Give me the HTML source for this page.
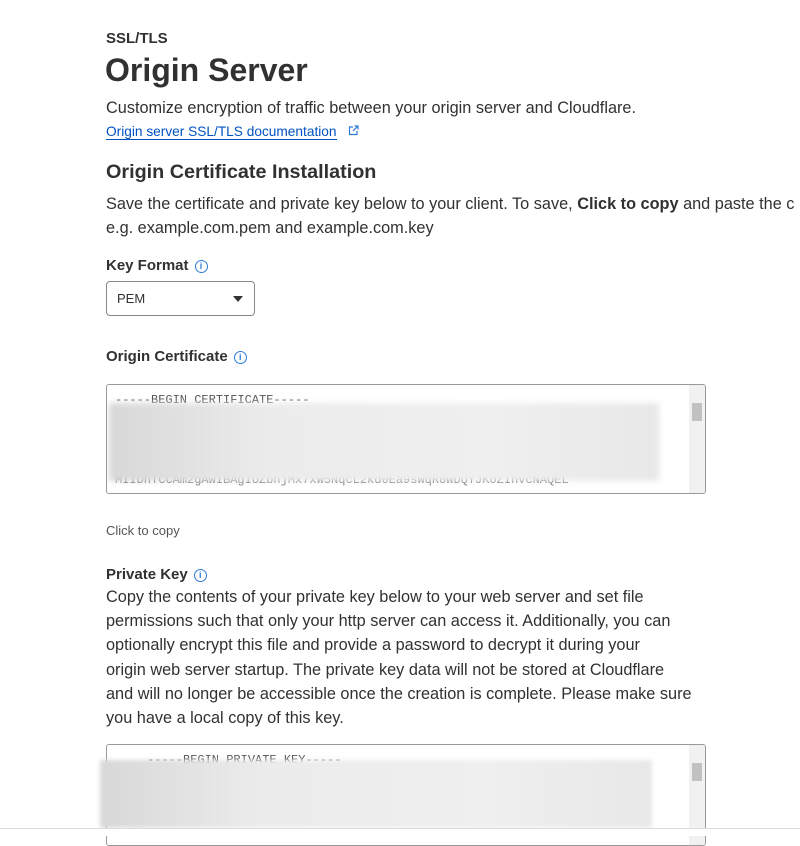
<!DOCTYPE html>
<html><head><meta charset="utf-8"><style>
body{margin:0;width:800px;height:835px;overflow:hidden;background:#fff;font-family:"Liberation Sans",sans-serif;color:#313131;position:relative}
.a{position:absolute;white-space:nowrap}
.i{display:inline-block;width:11px;height:11px;border:1.3px solid #2f7bd9;border-radius:50%;color:#2f7bd9;font-size:9px;line-height:11px;text-align:center;font-weight:bold;vertical-align:1px;margin-left:6px}
.ta{position:absolute;left:106px;width:598px;border:1px solid #999;border-radius:3px;background:#fff;overflow:hidden}
.sb{position:absolute;right:0;top:0;bottom:0;width:16px;background:#f1f1f1}
.th{position:absolute;right:3px;width:10px;top:18px;height:18px;background:#c1c1c1}
.blur{position:absolute;background:linear-gradient(90deg,#d8d8d8,#ececec 30%,#efefef 70%,#e8e8e8);filter:blur(3px)}
.mono{font-family:"Liberation Mono",monospace;font-size:12px;color:#555;position:absolute;left:8px}
.p{font-size:16.3px}
</style></head><body>
<div class="a" style="left:106px;top:30px;font-size:15px;font-weight:bold">SSL/TLS</div>
<div class="a" style="left:105px;top:52px;font-size:32px;font-weight:bold">Origin Server</div>
<div class="a p" style="left:106px;top:99px">Customize encryption of traffic between your origin server and Cloudflare.</div>
<div class="a" style="left:106px;top:124px;font-size:13.7px;color:#0051c3;border-bottom:1px solid #0051c3">Origin server SSL/TLS documentation</div>
<svg class="a" style="left:348px;top:125px" width="11" height="11" viewBox="0 0 11 11" fill="none" stroke="#2f7bd9" stroke-width="1.2"><path d="M5 2H1.5v7.5H9V6"/><path d="M6.5 1H10v3.5M10 1L5 6"/></svg>
<div class="a" style="left:106px;top:161px;font-size:19.8px;font-weight:bold">Origin Certificate Installation</div>
<div class="a p" style="left:106px;top:195px">Save the certificate and private key below to your client. To save, <b>Click to copy</b> and paste the c</div>
<div class="a p" style="left:106px;top:219px">e.g. example.com.pem and example.com.key</div>
<div class="a" style="left:106px;top:257px;font-size:15px;font-weight:bold">Key Format<span class="i">i</span></div>
<div class="a" style="left:106px;top:281px;width:147px;height:33px;border:1px solid #888;border-radius:4px"><span style="position:absolute;left:10px;top:9px;font-size:13px">PEM</span><span style="position:absolute;right:11px;top:14px;border-left:5px solid transparent;border-right:5px solid transparent;border-top:6px solid #333"></span></div>
<div class="a" style="left:106px;top:348px;font-size:15px;font-weight:bold">Origin Certificate<span class="i">i</span></div>
<div class="ta" style="top:384px;height:108px"><div class="mono" style="top:8px">-----BEGIN CERTIFICATE-----</div><div class="mono" style="top:88px;color:#777">MIIDhTCCAm2gAwIBAgIUZbhjMx7xW5NqcL2kd0Ea9sWqR8wDQYJKoZIhvcNAQEL</div><div class="blur" style="left:2px;top:18px;width:550px;height:78px"></div><div class="sb"><div class="th"></div></div></div>
<div class="a" style="left:106px;top:523px;font-size:13px;color:#555">Click to copy</div>
<div class="a" style="left:106px;top:566px;font-size:15px;font-weight:bold">Private Key<span class="i">i</span></div>
<div class="a p" style="left:106px;top:585px;line-height:24.2px">Copy the contents of your private key below to your web server and set file<br>permissions such that only your http server can access it. Additionally, you can<br>optionally encrypt this file and provide a password to decrypt it during your<br>origin web server startup. The private key data will not be stored at Cloudflare<br>and will no longer be accessible once the creation is complete. Please make sure<br>you have a local copy of this key.</div>
<div class="ta" style="top:744px;height:100px"><div class="mono" style="top:8px;left:40px">-----BEGIN PRIVATE KEY-----</div><div class="sb"><div class="th"></div></div></div>
<div class="blur" style="left:100px;top:760px;width:552px;height:68px;filter:blur(2px)"></div>
<div class="a" style="left:0;top:828px;width:800px;height:7px;background:#fff;border-top:1px solid #ddd"></div>
</body></html>
